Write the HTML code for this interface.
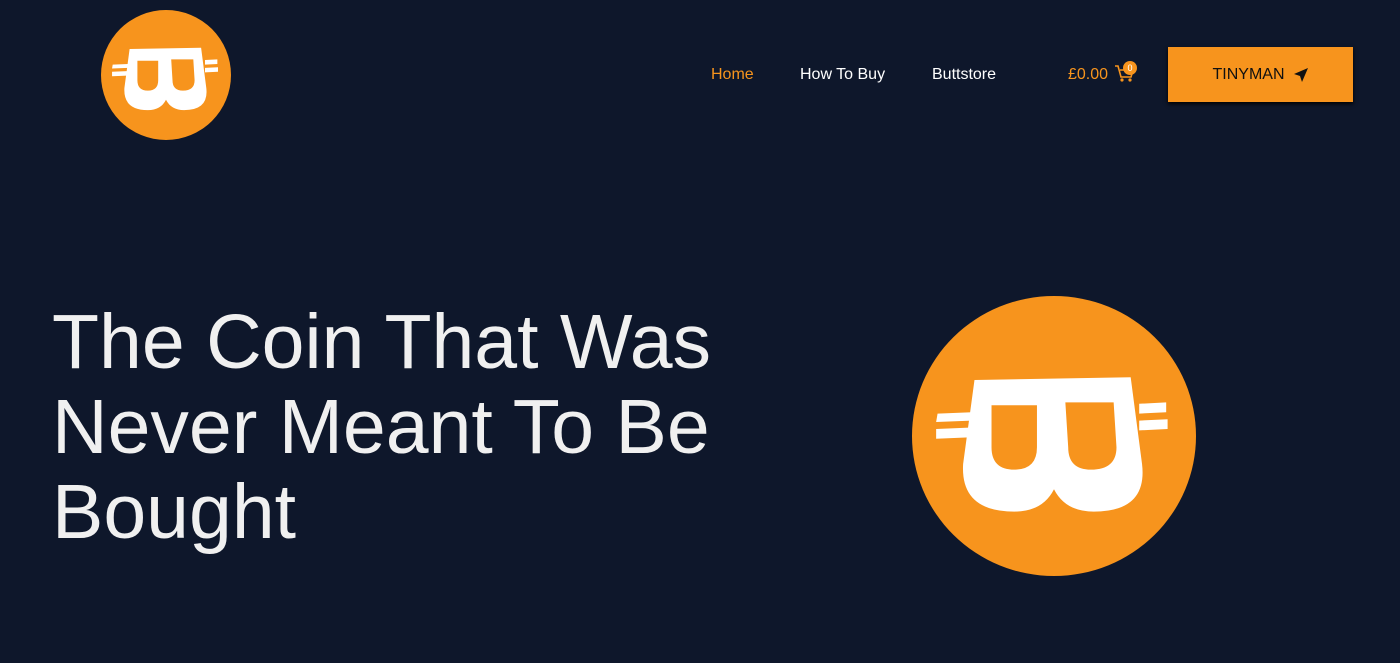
<!DOCTYPE html>
<html><head><meta charset="utf-8"><style>
*{margin:0;padding:0;box-sizing:border-box}
body{width:1400px;height:663px;background:#0e172b;font-family:"Liberation Sans",sans-serif;position:relative;overflow:hidden}
.nav{position:absolute;top:66px;font-size:16px;color:#fff}
h1{position:absolute;left:52px;top:300px;font-weight:300;font-size:77px;line-height:85px;color:#f0f0f0;letter-spacing:0px}
.btn{position:absolute;left:1168px;top:47px;width:185px;height:55px;background:#f7941d;color:#111;font-size:16px;display:flex;align-items:center;justify-content:center;gap:8px;box-shadow:0 2px 4px #000}
</style></head><body>
<svg width="0" height="0" style="position:absolute"><defs><g id="g" fill="#fff"><path fill-rule="evenodd" d="M22 30L77 29L81 60Q83 77 64 77Q54 77 50 69Q46 77 36 77Q17 77 18 60ZM28 39H44V54Q44 62 36 62Q28 62 28 54ZM54 38H71L72 54Q72 62 63 62Q55 62 55 54Z"/>
<path d="M9 42L21 41.5V44.5L8.5 45ZM8.5 47.5L20 47V50.5L8.5 51ZM80 38.5L89.5 38V41.5L80 42ZM80 44.5L90 44V47.5L80 48Z"/></g></defs></svg>
<svg style="position:absolute;left:101px;top:10px" width="130" height="130" viewBox="0 0 100 100">
<circle cx="50" cy="50" r="50" fill="#f7941d"/><use href="#g"/></svg>
<div class="nav" style="left:711px;color:#f7941d">Home</div>
<div class="nav" style="left:800px">How To Buy</div>
<div class="nav" style="left:932px">Buttstore</div>
<div class="nav" style="left:1068px;color:#f7941d">£0.00</div>
<svg style="position:absolute;left:1114px;top:60px" width="26" height="24" viewBox="0 0 26 24"><path d="M1 6h3l3 11h10l2-7H6" fill="none" stroke="#f7941d" stroke-width="1.6"/><circle cx="8" cy="20" r="1.6" fill="#f7941d"/><circle cx="16" cy="20" r="1.6" fill="#f7941d"/><circle cx="16" cy="8" r="7" fill="#f7941d"/><text x="16" y="11" font-size="9" fill="#fff" text-anchor="middle" font-family="Liberation Sans">0</text></svg>
<div class="btn">TINYMAN <svg width="16" height="16" viewBox="0 0 16 16"><path d="M15 1L1 7l6 2 2 6z" fill="#111"/></svg></div>
<h1>The Coin That Was<br>Never Meant To Be<br>Bought</h1>
<svg style="position:absolute;left:912px;top:296px" width="284" height="280" viewBox="0 0 100 100" preserveAspectRatio="none">
<circle cx="50" cy="50" r="50" fill="#f7941d"/><use href="#g"/></svg>
</body></html>
